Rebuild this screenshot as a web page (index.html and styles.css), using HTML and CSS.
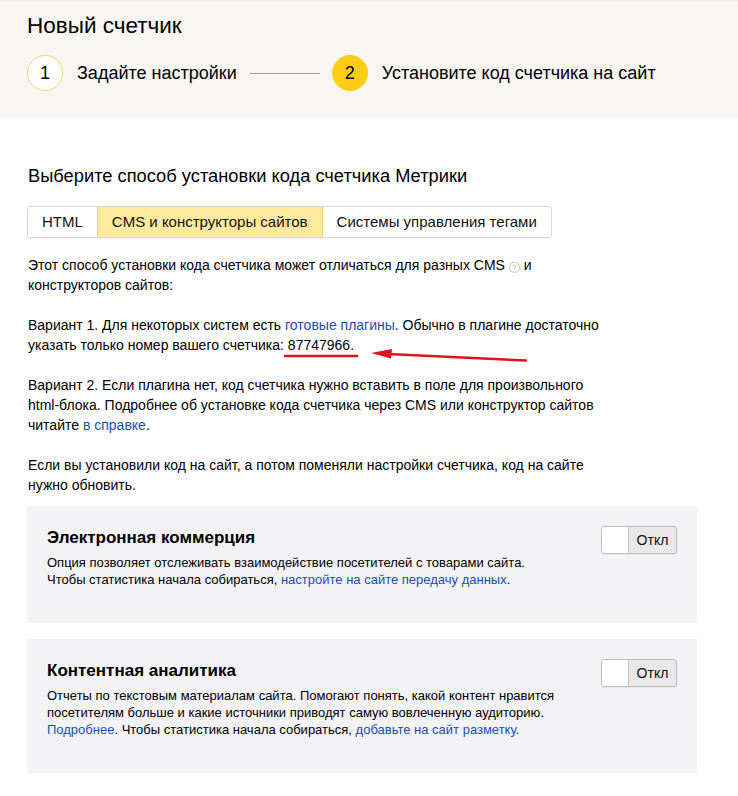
FILE: index.html
```html
<!DOCTYPE html>
<html lang="ru">
<head>
<meta charset="utf-8">
<title>Новый счетчик</title>
<link rel="stylesheet" href="styles.css">
</head>
<body>
<div class="page">
  <header class="header">
    <h1 class="title">Новый счетчик</h1>
    <div class="steps">
      <div class="step">
        <span class="circle">1</span>
        <span class="step-label">Задайте настройки</span>
      </div>
      <span class="step-line"></span>
      <div class="step">
        <span class="circle circle-active">2</span>
        <span class="step-label">Установите код счетчика на сайт</span>
      </div>
    </div>
  </header>

  <main class="content">
    <h2 class="section-title">Выберите способ установки кода счетчика Метрики</h2>
    <div class="tabs">
      <span class="tab">HTML</span>
      <span class="tab tab-active">CMS и конструкторы сайтов</span>
      <span class="tab">Системы управления тегами</span>
    </div>

    <p class="text">Этот способ установки кода счетчика может отличаться для разных CMS <span class="help">?</span> и<br>конструкторов сайтов:</p>
    <p class="text">Вариант 1. Для некоторых систем есть <a class="link" href="#">готовые плагины</a>. Обычно в плагине достаточно<br>указать только номер вашего счетчика: 87747966.</p>
    <p class="text">Вариант 2. Если плагина нет, код счетчика нужно вставить в поле для произвольного<br>html-блока. Подробнее об установке кода счетчика через CMS или конструктор сайтов<br>читайте <a class="link" href="#">в справке</a>.</p>
    <p class="text text-last">Если вы установили код на сайт, а потом поменяли настройки счетчика, код на сайте<br>нужно обновить.</p>

    <section class="option">
      <div class="option-head">
        <h3 class="option-title">Электронная коммерция</h3>
        <span class="toggle"><span class="toggle-knob"></span><span class="toggle-text">Откл</span></span>
      </div>
      <p class="option-desc">Опция позволяет отслеживать взаимодействие посетителей с товарами сайта.<br>Чтобы статистика начала собираться, <a class="link" href="#">настройте на сайте передачу данных</a>.</p>
    </section>

    <section class="option">
      <div class="option-head">
        <h3 class="option-title">Контентная аналитика</h3>
        <span class="toggle"><span class="toggle-knob"></span><span class="toggle-text">Откл</span></span>
      </div>
      <p class="option-desc">Отчеты по текстовым материалам сайта. Помогают понять, какой контент нравится<br>посетителям больше и какие источники приводят самую вовлеченную аудиторию.<br><a class="link" href="#">Подробнее</a>. Чтобы статистика начала собираться, <a class="link" href="#">добавьте на сайт разметку</a>.</p>
    </section>
  </main>

  <svg class="annotation" width="738" height="796" viewBox="0 0 738 796" aria-hidden="true">
    <line x1="285" y1="356" x2="357" y2="356" stroke="#e3101e" stroke-width="2.5" stroke-linecap="round"/>
    <line x1="526" y1="360.5" x2="388" y2="354" stroke="#e3101e" stroke-width="2.5" stroke-linecap="round"/>
    <polygon points="371,353 392,349 391,358.5" fill="#e3101e"/>
  </svg>
</div>
</body>
</html>
```

FILE: styles.css
```css
* {
  box-sizing: border-box;
}

html, body {
  margin: 0;
  padding: 0;
  background: #ffffff;
}

body {
  font-family: "Liberation Sans", Arial, sans-serif;
  color: #000000;
}

.page {
  position: relative;
  width: 738px;
  min-height: 796px;
}

.header {
  background: #f7f6f3;
  padding: 12px 28px 27px 27px;
  border-top: 1px solid #efeeeb;
}

.title {
  margin: 0;
  font-size: 22.5px;
  line-height: 26px;
  font-weight: 400;
}

.steps {
  display: flex;
  align-items: center;
  margin-top: 16px;
  height: 36px;
}

.step {
  display: flex;
  align-items: center;
}

.circle {
  width: 36px;
  height: 36px;
  border-radius: 50%;
  border: 1px solid #f1d777;
  display: flex;
  align-items: center;
  justify-content: center;
  font-size: 18px;
  background: #ffffff;
}

.circle-active {
  background: #fdcd14;
  border-color: #fdcd14;
}

.step-label {
  margin-left: 14px;
  font-size: 18px;
  line-height: 24px;
}

.step-line {
  width: 70px;
  height: 1px;
  background: #9a9a9a;
  margin: 0 12px 0 13px;
}

.content {
  padding: 0 41px 0 27px;
}

.section-title {
  margin: 46px 0 0 1px;
  font-size: 18.3px;
  line-height: 24px;
  font-weight: 400;
}

.tabs {
  display: inline-flex;
  margin-top: 18px;
  border: 1px solid #d8d8d8;
  border-radius: 3px;
  box-shadow: 0 1px 1px rgba(0, 0, 0, 0.06);
  overflow: hidden;
}

.tab {
  height: 30px;
  line-height: 30px;
  padding: 0 14px;
  font-size: 15px;
  color: #111111;
  background: #ffffff;
}

.tab-active {
  background: #ffeba0;
  box-shadow: inset 1px 0 0 #e6cf7c, inset -1px 0 0 #e6cf7c;
  padding: 0 15px;
}

.text {
  margin: 17px 0 20px 1px;
  font-size: 14px;
  line-height: 20px;
}

.text + .text {
  margin-top: 0;
}

.text-last {
  margin-bottom: 11px;
}

.link {
  color: #1a4fb0;
  text-decoration: none;
}

.help {
  display: inline-block;
  width: 11px;
  height: 11px;
  border: 1px solid #c4c4c4;
  border-radius: 50%;
  font-size: 8px;
  line-height: 9px;
  text-align: center;
  color: #a8a8a8;
  vertical-align: 0;
}

.option {
  background: #f3f3f5;
  padding: 20px 20px 35px 20px;
  margin-bottom: 16px;
}

.option-head {
  display: flex;
  justify-content: space-between;
  align-items: flex-start;
}

.option-title {
  margin: 0;
  font-size: 17px;
  line-height: 24px;
  font-weight: 700;
}

.toggle {
  display: flex;
  width: 76px;
  height: 28px;
  border: 1px solid #bdbdbd;
  border-radius: 3px;
  overflow: hidden;
  background: #e9e9e9;
  box-shadow: 0 1px 1px rgba(0, 0, 0, 0.05);
}

.toggle-knob {
  width: 27px;
  background: #ffffff;
  border-right: 1px solid #c4c4c4;
}

.toggle-text {
  flex: 1;
  text-align: center;
  font-size: 14px;
  line-height: 26px;
  color: #111111;
}

.option-desc {
  margin: 0;
  font-size: 13px;
  line-height: 17px;
}

.annotation {
  position: absolute;
  top: 0;
  left: 0;
  pointer-events: none;
}
```
